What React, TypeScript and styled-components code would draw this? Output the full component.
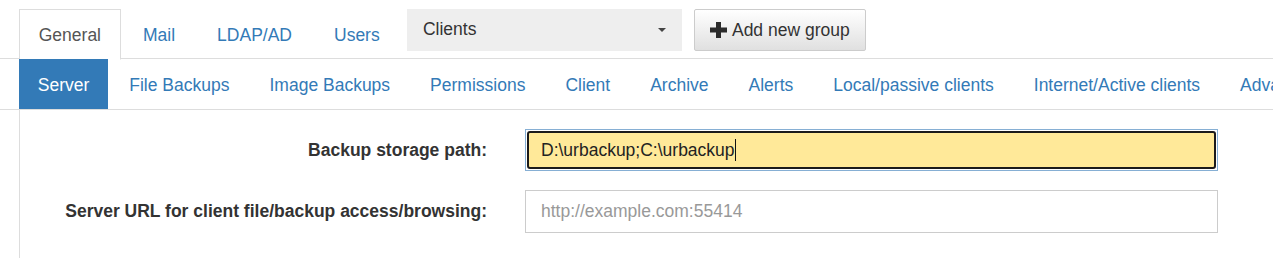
import React from "react";
import styled, { createGlobalStyle } from "styled-components";

const GlobalStyle = createGlobalStyle`
  html, body { margin: 0; padding: 0; background: #fff; }
  body {
    font-family: "Liberation Sans", Arial, sans-serif;
    font-size: 17.5px;
    color: #333;
  }
  * { box-sizing: border-box; }
`;

const Page = styled.div`
  width: 1273px;
  height: 258px;
  overflow: hidden;
  padding: 9px 0 0 19px;
`;

const TopTabs = styled.div`
  display: flex;
  align-items: flex-start;
  height: 50px;
  border-bottom: 1px solid #ddd;
  margin-left: -19px;
  padding-left: 19px;
`;

const Tab = styled.div<{ $active?: boolean }>`
  height: 51px;
  margin-right: 2.5px;
  margin-bottom: -1px;
  padding: 1px 18.75px 0;
  line-height: 49px;
  border: 1px solid ${(p) => (p.$active ? "#ddd" : "transparent")};
  border-bottom-color: ${(p) => (p.$active ? "#fff" : "transparent")};
  background: ${(p) => (p.$active ? "#fff" : "transparent")};
  color: ${(p) => (p.$active ? "#555" : "#337ab7")};
  white-space: nowrap;
`;

const GroupSelect = styled.div`
  display: flex;
  align-items: center;
  justify-content: space-between;
  width: 275px;
  height: 41.5px;
  margin-left: 5px;
  padding: 0 16px;
  background: #eee;
  color: #333;
`;

const Caret = styled.span`
  width: 0;
  height: 0;
  border-left: 4px solid transparent;
  border-right: 4px solid transparent;
  border-top: 4px solid #444;
`;

const AddButton = styled.div`
  display: flex;
  align-items: center;
  gap: 5px;
  height: 42px;
  margin-left: 12px;
  padding: 0 15px 0 15px;
  border: 1px solid #ccc;
  border-radius: 2px;
  background: linear-gradient(to bottom, #fff 0%, #e0e0e0 100%);
  color: #333;
  white-space: nowrap;
`;

const PlusIcon = () => (
  <svg width="17" height="16" viewBox="0 0 17 16" aria-hidden="true">
    <path d="M6 0h5v5.5h6v5h-6V16H6v-5.5H0v-5h6z" fill="#2b2b2b" />
  </svg>
);

const SubTabs = styled.div`
  display: flex;
  height: 51px;
  border-bottom: 1px solid #ddd;
  margin-left: -19px;
  padding-left: 19px;
`;

const Pill = styled.div<{ $active?: boolean }>`
  height: 50px;
  line-height: 48px;
  padding: 2px 18.75px 0;
  margin-right: 2.5px;
  background: ${(p) => (p.$active ? "#337ab7" : "transparent")};
  color: ${(p) => (p.$active ? "#fff" : "#337ab7")};
  white-space: nowrap;
  flex-shrink: 0;
`;

const Panel = styled.div`
  border-left: 1px solid #ddd;
  height: 160px;
  padding-top: 19px;
`;

const FormRow = styled.div`
  display: grid;
  grid-template-columns: 467px 693px;
  column-gap: 38px;
  align-items: center;
  margin-bottom: 19px;
`;

const Label = styled.label`
  text-align: right;
  font-weight: bold;
  color: #333;
  white-space: nowrap;
  padding-top: 1px;
`;

const FocusRing = styled.div`
  height: 42px;
  border: 1px solid #86afd4;
  padding: 1px;
`;

const FocusedInput = styled.div`
  display: flex;
  align-items: center;
  height: 100%;
  border: 2px solid #1b1b1b;
  border-radius: 3px;
  background: #ffe999;
  padding-left: 12px;
  color: #222;
  white-space: nowrap;
`;

const TextCaret = styled.span`
  display: inline-block;
  width: 1.5px;
  height: 22px;
  background: #111;
`;

const TextInput = styled.input`
  display: block;
  width: 100%;
  height: 42.5px;
  border: 1px solid #ccc;
  border-radius: 0;
  padding: 0 15px;
  font-family: "Liberation Sans", Arial, sans-serif;
  font-size: 17.5px;
  color: #555;
  background: #fff;
  outline: none;
  &::placeholder { color: #999; }
`;

const topTabs = ["General", "Mail", "LDAP/AD", "Users"];
const subTabs = [
  "Server",
  "File Backups",
  "Image Backups",
  "Permissions",
  "Client",
  "Archive",
  "Alerts",
  "Local/passive clients",
  "Internet/Active clients",
  "Advanced",
];

export default function App() {
  return (
    <>
      <GlobalStyle />
      <Page>
        <TopTabs>
          {topTabs.map((t, i) => (
            <Tab key={t} $active={i === 0}>
              {t}
            </Tab>
          ))}
          <GroupSelect>
            <span>Clients</span>
            <Caret />
          </GroupSelect>
          <AddButton>
            <PlusIcon />
            <span>Add new group</span>
          </AddButton>
        </TopTabs>
        <SubTabs>
          {subTabs.map((t, i) => (
            <Pill key={t} $active={i === 0}>
              {t}
            </Pill>
          ))}
        </SubTabs>
        <Panel>
          <FormRow>
            <Label>Backup storage path:</Label>
            <FocusRing>
              <FocusedInput>
                <span>D:\urbackup;C:\urbackup</span>
                <TextCaret />
              </FocusedInput>
            </FocusRing>
          </FormRow>
          <FormRow>
            <Label>Server URL for client file/backup access/browsing:</Label>
            <TextInput placeholder="http://example.com:55414" />
          </FormRow>
        </Panel>
      </Page>
    </>
  );
}
